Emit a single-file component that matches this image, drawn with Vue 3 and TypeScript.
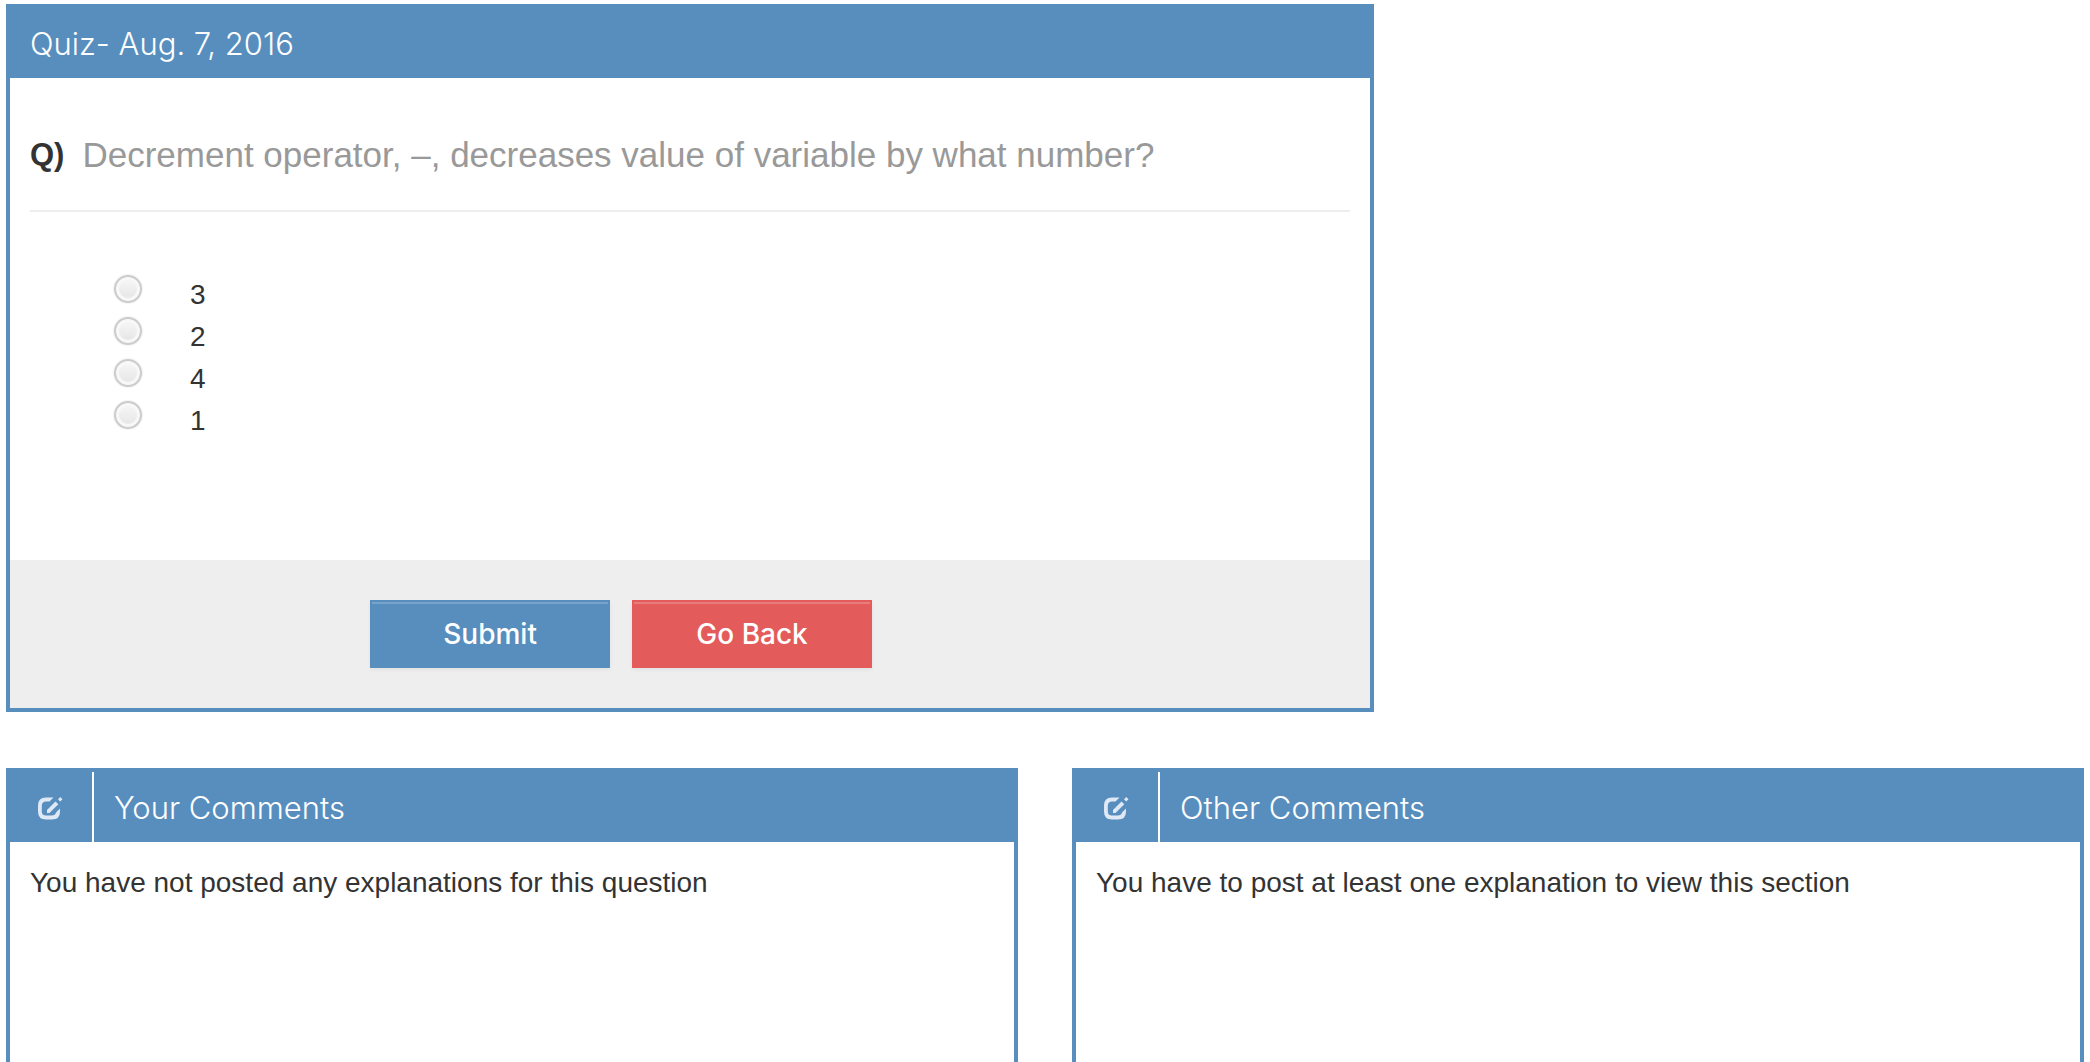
<script setup lang="ts">
import { ref } from 'vue'

interface CommentPanel {
  id: string
  title: string
  message: string
}

const options: string[] = ['3', '2', '4', '1']
const answer = ref<string | null>(null)

const panels: CommentPanel[] = [
  {
    id: 'yours',
    title: 'Your Comments',
    message: 'You have not posted any explanations for this question',
  },
  {
    id: 'others',
    title: 'Other Comments',
    message: 'You have to post at least one explanation to view this section',
  },
]
</script>

<template>
  <main class="page">
    <form class="card quiz" @submit.prevent>
      <header class="card-head">
        <h1 class="title">Quiz- Aug. 7, 2016</h1>
      </header>
      <div class="quiz-body">
        <h2 class="question">
          <strong class="mark">Q)</strong>
          <span>Decrement operator, –, decreases value of variable by what number?</span>
        </h2>
        <div class="options" role="radiogroup" aria-label="Answers">
          <label v-for="option in options" :key="option" class="option">
            <input v-model="answer" class="radio" type="radio" name="answer" :value="option" />
            <span>{{ option }}</span>
          </label>
        </div>
      </div>
      <footer class="actions">
        <button class="btn primary" type="submit">Submit</button>
        <button class="btn danger" type="button">Go Back</button>
      </footer>
    </form>

    <div class="comments">
      <section v-for="panel in panels" :key="panel.id" class="card comment">
        <header class="card-head">
          <span class="icon-cell">
            <svg class="icon" viewBox="0 0 26 24" aria-hidden="true">
              <path
                fill="#dfe9f5"
                d="M16.500 1.500 12.500 5.500H9Q4.800 5.500 4.800 10V15.500Q4.800 19.500 9 19.500H14.500Q18.500 19.500 19 16.500L23 12.500V15.500Q23 23.500 15 23.500H9Q1 23.500 1 15.500V9.500Q1 1.500 9 1.500Z"
              />
              <path fill="#dfe9f5" d="M10 17V14L18.500 5.500 21.300 8.300 12.500 17Z" />
              <path fill="#dfe9f5" d="M21 3.300 23.300 1 25.500 3.200 23.200 5.500Z" />
            </svg>
          </span>
          <h2 class="title">{{ panel.title }}</h2>
        </header>
        <p class="message">{{ panel.message }}</p>
      </section>
    </div>
  </main>
</template>

<style>
body {
  margin: 0;
  background: #fff;
}
</style>

<style scoped>
.page {
  box-sizing: border-box;
  display: flex;
  flex-direction: column;
  gap: 56px;
  min-height: 100vh;
  padding: 4px 6px 0;
  color: #333;
  font-family: 'Liberation Sans', Arial, sans-serif;
  font-size: 28px;
  line-height: 42px;
}

.card {
  box-sizing: border-box;
  border: 4px solid #578ebe;
  background: #fff;
}

.card-head {
  display: flex;
  align-items: stretch;
  height: 70px;
  background: #578ebe;
  color: #fff;
}

.title {
  margin: 0;
  padding-left: 20px;
  font-family: Inter, 'Liberation Sans', sans-serif;
  font-size: 31px;
  font-weight: 300;
  line-height: 72px;
}

.quiz {
  width: calc((100% + 54px) * 2 / 3 - 53px);
}

.quiz-body {
  padding: 50px 20px 120px;
}

.question {
  display: flex;
  gap: 18px;
  margin: 0;
  padding: 2px 0 30px;
  border-bottom: 2px solid #eee;
  color: #999;
  font-size: 35px;
  font-weight: 400;
  line-height: 50px;
}

.mark {
  color: #333;
  font-size: 31px;
  font-weight: 700;
}

.options {
  display: flex;
  flex-direction: column;
  align-items: flex-start;
  padding: 60px 0 0 84px;
}

.option {
  display: flex;
  align-items: flex-start;
  gap: 48px;
  height: 42px;
  line-height: 46px;
}

.radio {
  appearance: none;
  box-sizing: border-box;
  width: 28px;
  height: 28px;
  margin: 3px 0 0;
  border: 2px solid #ccc;
  border-radius: 50%;
  background: linear-gradient(#f8f8f8, #e4e4e4);
  box-shadow:
    0 0 1px 1px rgba(0, 0, 0, 0.05),
    inset 0 0 1px 3px #f8f8f8;
}

.radio:checked {
  background: radial-gradient(circle, #555 35%, #f0f0f0 40%);
}

.actions {
  display: flex;
  gap: 22px;
  padding: 40px 20px 40px calc(25% + 20px);
  background: #eee;
}

.btn {
  box-sizing: border-box;
  width: 240px;
  height: 68px;
  padding: 0;
  border: 2px solid;
  color: #fff;
  font-family: Inter, 'Liberation Sans', sans-serif;
  font-size: 28px;
  font-weight: 500;
  line-height: 36px;
  box-shadow:
    0 2px 4px rgba(0, 0, 0, 0.05),
    inset 0 2px 0 rgba(255, 255, 255, 0.2);
}

.primary {
  border-color: #578ebe;
  background: #578ebe;
}

.danger {
  border-color: #e35b5a;
  background: #e35b5a;
}

.comments {
  display: flex;
  flex: 1;
  gap: 54px;
}

.comment {
  flex: 1;
  border-bottom: 0;
}

.icon-cell {
  display: flex;
  align-items: center;
  padding: 2px 29px 0 27px;
  border-right: 2px solid #fff;
}

.icon {
  width: 26px;
  height: 24px;
}

.message {
  margin: 0;
  padding: 20px;
}
</style>
